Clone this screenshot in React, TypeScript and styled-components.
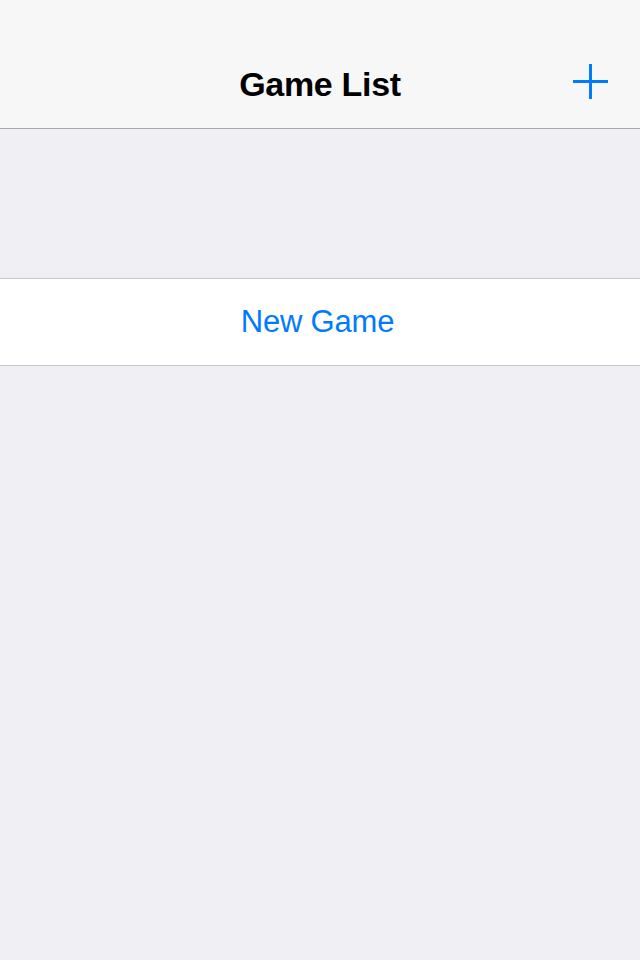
import React from "react";
import styled, { createGlobalStyle } from "styled-components";

const Global = createGlobalStyle`
  html, body { margin: 0; padding: 0; }
  body { background: #efeff4; font-family: "Liberation Sans", Arial, sans-serif; }
`;

const Screen = styled.div`
  width: 640px;
  height: 960px;
  background: #efeff4;
  display: flex;
  flex-direction: column;
`;

const NavBar = styled.header`
  height: 129px;
  box-sizing: border-box;
  padding-top: 40px;
  background: #f7f7f7;
  border-bottom: 1px solid #a7a7aa;
  display: grid;
  grid-template-columns: 1fr auto 1fr;
  align-items: center;
`;

const Title = styled.h1`
  grid-column: 2;
  margin: 0;
  font-size: 34px;
  font-weight: 700;
  color: #000;
  letter-spacing: -0.3px;
`;

const AddButton = styled.button`
  grid-column: 3;
  justify-self: end;
  margin-right: 32px;
  width: 35px;
  height: 35px;
  padding: 0;
  border: 0;
  background: none;
  display: flex;
  align-items: center;
  justify-content: center;
  margin-top: -6px;
`;

const Spacer = styled.div`
  height: 149px;
`;

const Group = styled.div`
  background: #fff;
  border-top: 1px solid #c8c7cc;
  border-bottom: 1px solid #c8c7cc;
`;

const Cell = styled.div`
  height: 86px;
  box-sizing: border-box;
  padding-right: 5px;
  display: flex;
  align-items: center;
  justify-content: center;
  font-size: 31px;
  color: #007aff;
  letter-spacing: -0.2px;
`;

export default function App() {
  return (
    <Screen>
      <Global />
      <NavBar>
        <Title>Game List</Title>
        <AddButton aria-label="Add">
          <svg width="35" height="35" viewBox="0 0 35 35">
            <rect x="16" y="0" width="3" height="35" fill="#007aff" />
            <rect x="0" y="16" width="35" height="3" fill="#007aff" />
          </svg>
        </AddButton>
      </NavBar>
      <Spacer />
      <Group>
        <Cell>New Game</Cell>
      </Group>
    </Screen>
  );
}
